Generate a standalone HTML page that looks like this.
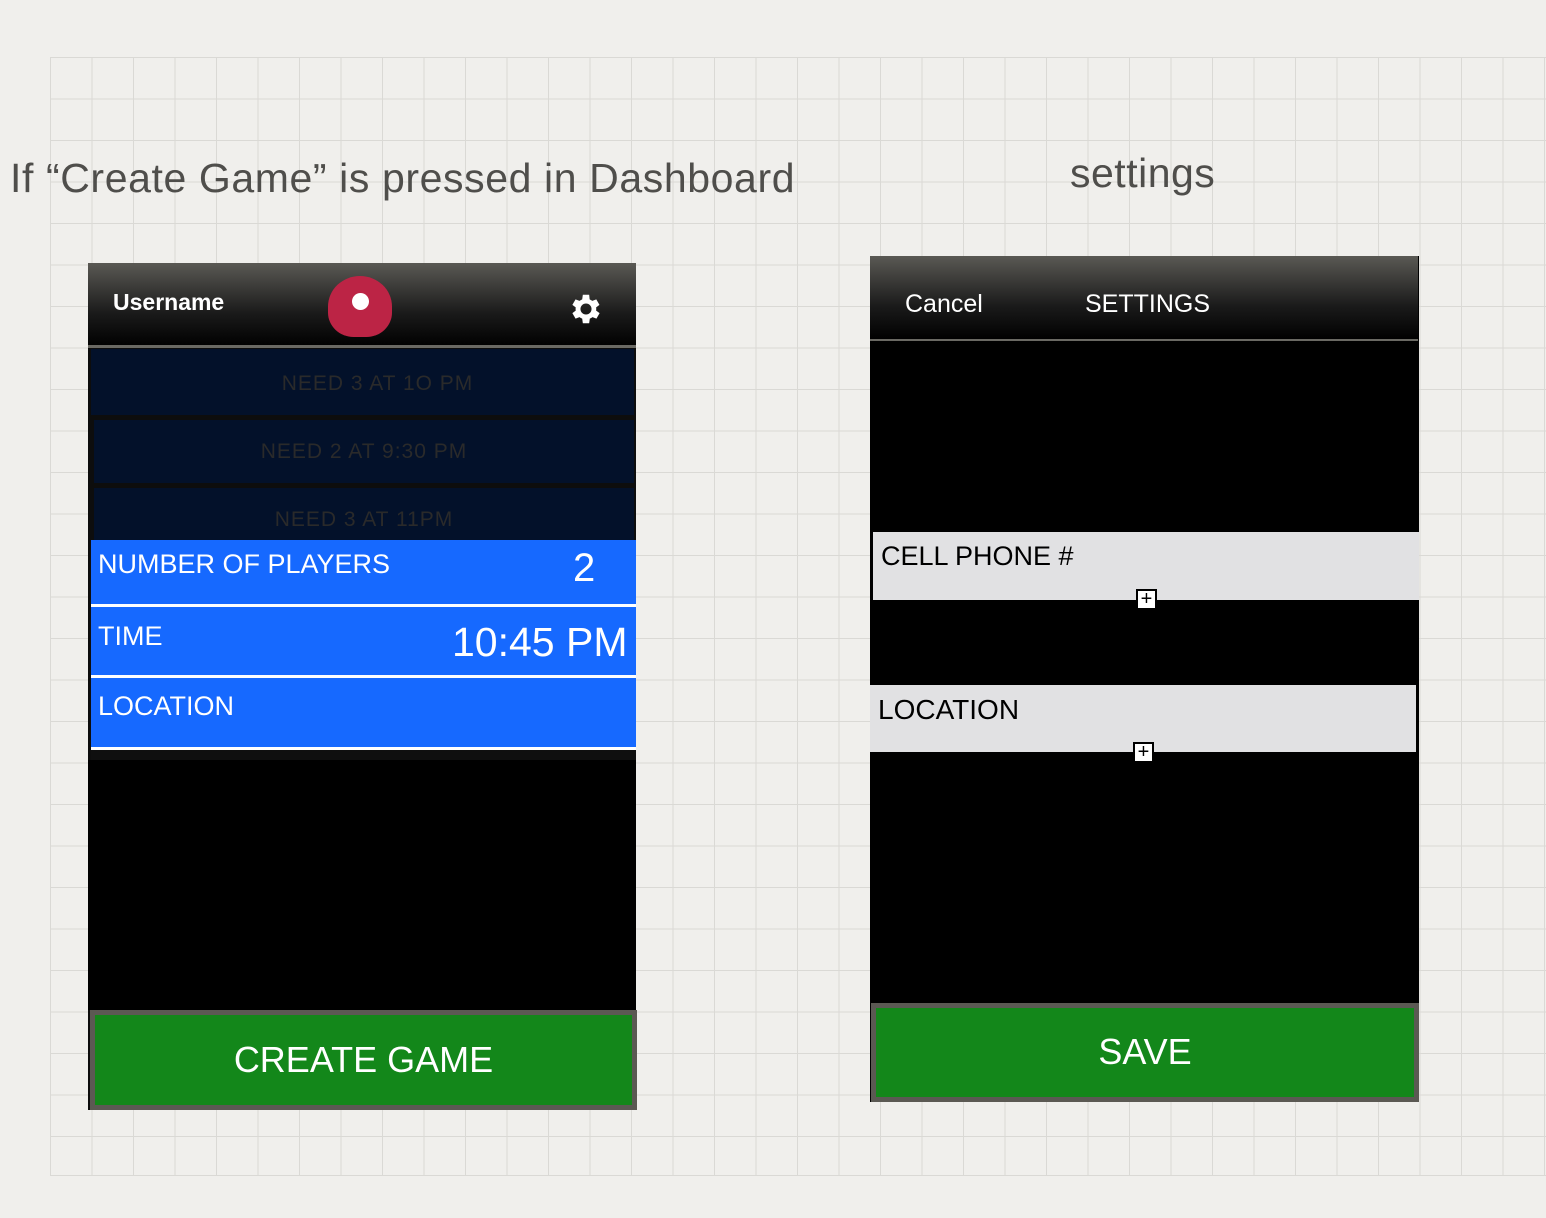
<!DOCTYPE html>
<html><head><meta charset="utf-8"><style>
*{margin:0;padding:0;box-sizing:border-box}
body{width:1546px;height:1218px;position:relative;overflow:hidden;background:#f0efec;font-family:"Liberation Sans",sans-serif}
.grid{position:absolute;left:50px;top:57px;width:1496px;height:1119px;
background-image:linear-gradient(to right,#dad9d5 1px,transparent 1px),linear-gradient(to bottom,#dad9d5 1px,transparent 1px);
background-size:41.5px 41.5px;border-bottom:1px solid #dad9d5}
.a{position:absolute}
.hdr{background:linear-gradient(#5a5954,#1a1a1a 60%,#000)}
.t{color:#fff;position:absolute;white-space:nowrap}
.navy{background:#03112a;color:#2a2a2a;text-align:center;font-size:21px;letter-spacing:1px}
.blue{background:#1669ff;border-bottom:3px solid #fff}
.gray{background:#e1e1e3}
.plus{position:absolute;width:21px;height:21px;background:#fff;border:2px solid #000;font-size:20px;line-height:16px;text-align:center;color:#000}
.btn{background:#13871a;border:5px solid #5b5953;color:#fff;text-align:center;font-size:36px}
</style></head><body>
<div class="grid"></div>
<div class="t" style="left:10px;top:155px;font-size:41px;letter-spacing:0.6px;color:#4f4e4b">If “Create Game” is pressed in Dashboard</div>
<div class="t" style="left:1070px;top:150px;font-size:41px;letter-spacing:0.5px;color:#4f4e4b">settings</div>

<!-- left phone -->
<div class="a" style="left:88px;top:263px;width:548px;height:847px;background:#0d0d0d"></div>
<div class="a hdr" style="left:88px;top:263px;width:548px;height:84px"></div>
<div class="a" style="left:88px;top:345px;width:548px;height:3px;background:#6a6963"></div>
<div class="t" style="left:113px;top:289px;font-size:23px;font-weight:bold">Username</div>
<div class="a" style="left:328px;top:276px;width:64px;height:61px;background:#bc2445;border-radius:50% 50% 40% 40%"></div>
<div class="a" style="left:352px;top:293px;width:17px;height:17px;background:#fff;border-radius:50%"></div>
<svg class="a" style="left:567px;top:290px" width="38" height="38" viewBox="0 0 24 24"><path fill="#fff" d="M19.4 13a7.5 7.5 0 0 0 0-2l2.1-1.6-2-3.5-2.5 1a7 7 0 0 0-1.7-1L15 3h-4l-.4 2.9a7 7 0 0 0-1.7 1l-2.5-1-2 3.5L6.5 11a7.5 7.5 0 0 0 0 2l-2.1 1.6 2 3.5 2.5-1a7 7 0 0 0 1.7 1L11 21h4l.4-2.9a7 7 0 0 0 1.7-1l2.5 1 2-3.5zM13 15.5a3.5 3.5 0 1 1 0-7 3.5 3.5 0 0 1 0 7z" transform="translate(-1 0)"/></svg>
<div class="a navy" style="left:91px;top:349px;width:543px;height:66px;line-height:70px;padding-left:30px">NEED 3 AT 1O PM</div>
<div class="a navy" style="left:94px;top:420px;width:540px;height:63px;line-height:64px">NEED 2 AT 9:30 PM</div>
<div class="a navy" style="left:94px;top:488px;width:540px;height:52px;line-height:64px;overflow:hidden">NEED 3 AT 11PM</div>
<div class="a blue" style="left:91px;top:540px;width:545px;height:67px"></div>
<div class="t" style="left:98px;top:549px;font-size:27px">NUMBER OF PLAYERS</div>
<div class="t" style="left:573px;top:546px;font-size:40px">2</div>
<div class="a blue" style="left:91px;top:607px;width:545px;height:71px"></div>
<div class="t" style="left:98px;top:621px;font-size:27px">TIME</div>
<div class="t" style="left:452px;top:619px;font-size:41px">10:45 PM</div>
<div class="a blue" style="left:91px;top:678px;width:545px;height:72px"></div>
<div class="t" style="left:98px;top:691px;font-size:27px">LOCATION</div>
<div class="a" style="left:91px;top:750px;width:545px;height:10px;background:#0f0f0f"></div>
<div class="a" style="left:88px;top:760px;width:548px;height:250px;background:#000"></div>
<div class="a btn" style="left:90px;top:1010px;width:547px;height:100px;line-height:90px">CREATE GAME</div>

<!-- right phone -->
<div class="a" style="left:870px;top:256px;width:549px;height:846px;background:#000"></div>
<div class="a hdr" style="left:870px;top:256px;width:548px;height:84px"></div>
<div class="a" style="left:870px;top:339px;width:548px;height:2px;background:#6a6963"></div>
<div class="t" style="left:905px;top:290px;font-size:25px">Cancel</div>
<div class="t" style="left:1085px;top:290px;font-size:25px">SETTINGS</div>
<div class="a gray" style="left:873px;top:532px;width:546px;height:68px"></div>
<div class="t" style="left:881px;top:541px;font-size:27px;color:#000">CELL PHONE #</div>
<div class="plus" style="left:1136px;top:589px">+</div>
<div class="a gray" style="left:870px;top:685px;width:546px;height:67px"></div>
<div class="t" style="left:878px;top:694px;font-size:28px;color:#000">LOCATION</div>
<div class="plus" style="left:1133px;top:742px">+</div>
<div class="a btn" style="left:871px;top:1003px;width:548px;height:99px;line-height:88px">SAVE</div>
</body></html>
